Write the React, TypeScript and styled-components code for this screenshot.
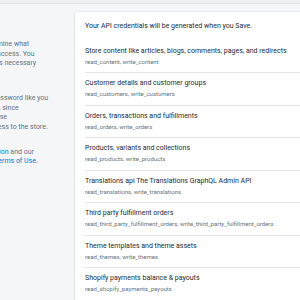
import React from "react";
import styled, { createGlobalStyle } from "styled-components";

const GlobalStyle = createGlobalStyle`
  html, body {
    margin: 0;
    padding: 0;
    overflow: hidden;
    background: #f4f6f8;
  }
  body {
    font-family: Roboto, "Noto Sans", "Liberation Sans", sans-serif;
    -webkit-font-smoothing: antialiased;
  }
`;

const TopBand = styled.div`
  height: 3px;
  background: #eef0f2;
  border-bottom: 1px solid #e1e4e8;
`;

const Layout = styled.div`
  display: flex;
  align-items: flex-start;
  gap: 30px;
  margin: 8px 0 0 -75px;
  width: 560px;
`;

const Annotation = styled.div`
  width: 120px;
  flex: none;
  color: #637381;
  font-size: 7px;
  line-height: 9.7px;
`;

const Heading = styled.h2`
  margin: 0 0 16px;
  font-size: 8px;
  line-height: 12px;
  font-weight: 500;
  color: #212b36;
`;

const Paragraph = styled.p`
  margin: 0 0 15px;
`;

const Line = styled.span`
  display: block;
  white-space: nowrap;
`;

const Link = styled.span`
  color: #007ace;
`;

const Card = styled.section`
  flex: 1;
  background: #ffffff;
  border-radius: 2px;
  box-shadow: 0 0 0 1px rgba(63, 63, 68, 0.05), 0 1px 2px rgba(63, 63, 68, 0.15);
  padding: 9px 10px 0;
`;

const Intro = styled.div`
  font-size: 7px;
  line-height: 10px;
  color: #212b36;
  padding-bottom: 9.7px;
`;

const ScopeRow = styled.div`
  padding: 5px 0 6.5px;
  border-bottom: 1px solid #e3e6ea;
`;

const ScopeTitle = styled.div`
  font-size: 7px;
  line-height: 11px;
  color: #212b36;
  white-space: nowrap;
`;

const ScopeCodes = styled.div`
  font-size: 6px;
  line-height: 9px;
  color: #637381;
  white-space: nowrap;
`;

const scopes = [
  ["Store content like articles, blogs, comments, pages, and redirects", "read_content, write_content"],
  ["Customer details and customer groups", "read_customers, write_customers"],
  ["Orders, transactions and fulfillments", "read_orders, write_orders"],
  ["Products, variants and collections", "read_products, write_products"],
  ["Translations api The Translations GraphQL Admin API", "read_translations, write_translations"],
  ["Third party fulfillment orders", "read_third_party_fulfillment_orders, write_third_party_fulfillment_orders"],
  ["Theme templates and theme assets", "read_themes, write_themes"],
  ["Shopify payments balance & payouts", "read_shopify_payments_payouts"],
  ["Inventory levels and locations", "read_inventory, write_inventory"],
];

export default function App() {
  return (
    <>
      <GlobalStyle />
      <TopBand />
      <Layout>
        <Annotation>
          <Heading>Admin API</Heading>
          <Paragraph>
            <Line>Set the scopes to determine what</Line>
            <Line>data this app is able to access. You</Line>
            <Line>should grant only scopes necessary</Line>
            <Line>for the app to work.</Line>
          </Paragraph>
          <Paragraph>
            <Line>Treat the API key and password like you</Line>
            <Line>would a store password, since</Line>
            <Line>whoever can access these</Line>
            <Line>credentials has API access to the store.</Line>
          </Paragraph>
          <Paragraph>
            <Line>
              Learn about <Link>authentication</Link> and our
            </Line>
            <Line>
              <Link>Shopify API License &amp; Terms of Use</Link>.
            </Line>
          </Paragraph>
        </Annotation>
        <Card>
          <Intro>Your API credentials will be generated when you Save.</Intro>
          {scopes.map(([title, codes]) => (
            <ScopeRow key={title}>
              <ScopeTitle>{title}</ScopeTitle>
              <ScopeCodes>{codes}</ScopeCodes>
            </ScopeRow>
          ))}
        </Card>
      </Layout>
    </>
  );
}
